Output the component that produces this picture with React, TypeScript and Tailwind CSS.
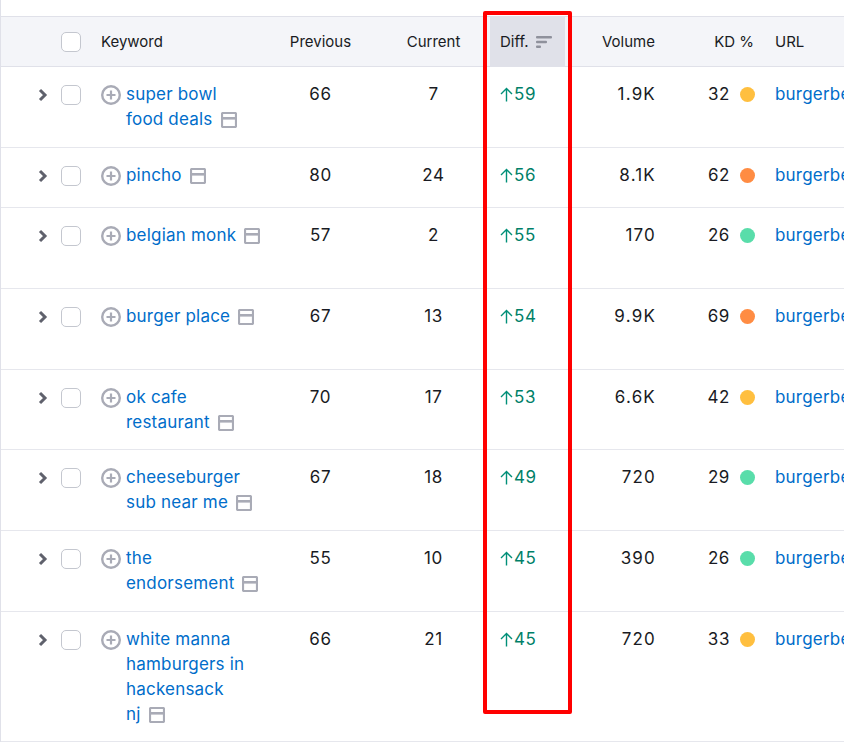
const rows = [
  { lines: ['super bowl', 'food deals'], prev: 66, cur: 7, diff: 59, vol: '1.9K', kd: 32, dot: 'bg-[#ffbf3f]', h: 'h-[81px]' },
  { lines: ['pincho'], prev: 80, cur: 24, diff: 56, vol: '8.1K', kd: 62, dot: 'bg-[#ff8c43]', h: 'h-[60px]' },
  { lines: ['belgian monk'], prev: 57, cur: 2, diff: 55, vol: '170', kd: 26, dot: 'bg-[#59ddaa]', h: 'h-[81px]' },
  { lines: ['burger place'], prev: 67, cur: 13, diff: 54, vol: '9.9K', kd: 69, dot: 'bg-[#ff8c43]', h: 'h-[81px]' },
  { lines: ['ok cafe', 'restaurant'], prev: 70, cur: 17, diff: 53, vol: '6.6K', kd: 42, dot: 'bg-[#ffbf3f]', h: 'h-[80px]' },
  { lines: ['cheeseburger', 'sub near me'], prev: 67, cur: 18, diff: 49, vol: '720', kd: 29, dot: 'bg-[#59ddaa]', h: 'h-[81px]' },
  { lines: ['the', 'endorsement'], prev: 55, cur: 10, diff: 45, vol: '390', kd: 26, dot: 'bg-[#59ddaa]', h: 'h-[81px]' },
  { lines: ['white manna', 'hamburgers in', 'hackensack', 'nj'], prev: 66, cur: 21, diff: 45, vol: '720', kd: 33, dot: 'bg-[#ffbf3f]', h: 'h-[130px]' },
];

function Checkbox() {
  return <div className="w-5 h-5 rounded-[5px] border border-[#c4c7cf] bg-white" />;
}

function SerpIcon() {
  return (
    <svg width="16" height="16" viewBox="0 0 16 16" className="inline-block ml-2 align-[-3px]">
      <rect x="1" y="1" width="14" height="14" rx="1" fill="none" stroke="#a9abb6" strokeWidth="2.2" />
      <rect x="1" y="5" width="14" height="2.6" fill="#a9abb6" />
    </svg>
  );
}

function PlusIcon() {
  return (
    <svg width="20" height="20" viewBox="0 0 20 20" className="shrink-0">
      <circle cx="10" cy="10" r="8.8" fill="none" stroke="#a9abb6" strokeWidth="2.4" />
      <path d="M10 5.5v9M5.5 10h9" stroke="#a9abb6" strokeWidth="2.2" />
    </svg>
  );
}

function Chevron() {
  return (
    <svg width="10" height="14" viewBox="0 0 10 14">
      <path d="M2 2l5 5-5 5" fill="none" stroke="#5f616c" strokeWidth="3" />
    </svg>
  );
}

function SortIcon() {
  return (
    <svg width="16" height="14" viewBox="0 0 16 14">
      <rect x="0" y="1" width="16" height="2.4" rx="1" fill="#8f919c" />
      <rect x="0" y="5.8" width="11" height="2.4" rx="1" fill="#8f919c" />
      <rect x="0" y="10.6" width="5" height="2.4" rx="1" fill="#8f919c" />
    </svg>
  );
}

function UpArrow() {
  return (
    <svg width="13" height="15" viewBox="0 0 13 15" className="shrink-0">
      <path d="M6.5 14.5V1.5M1 7l5.5-5.5L12 7" fill="none" stroke="#008f78" strokeWidth="1.4" />
    </svg>
  );
}

export default function App() {
  return (
    <div className="relative w-[844px] h-[746px] overflow-hidden bg-white text-[#191b23] font-['Inter',sans-serif]">
      <div className="pt-4 border-l border-[#e0e1e9] w-[900px]">
        {/* header */}
        <div className="flex items-center h-[51px] bg-[#f4f5f9] border-y border-[#e0e1e9] text-[15px] leading-[22px]">
          <div className="w-[80px] shrink-0 flex justify-end"><Checkbox /></div>
          <div className="w-[183px] pl-5 pt-[1px] shrink-0">Keyword</div>
          <div className="w-[113px] pt-[1px] text-center shrink-0">Previous</div>
          <div className="w-[113px] pt-[1px] text-center shrink-0">Current</div>
          <div className="w-[75px] h-full flex items-center gap-[8px] pl-[10px] pt-[1px] bg-[#e0e1e9] shrink-0">
            Diff.<SortIcon />
          </div>
          <div className="w-[90px] pt-[1px] text-right shrink-0">Volume</div>
          <div className="w-[99px] pt-[1px] text-right shrink-0">KD %</div>
          <div className="pl-[21px] pt-[1px]">URL</div>
        </div>
        {/* rows */}
        {rows.map((row, i) => (
          <div key={i} className={`flex items-start pt-[15px] border-b border-[#e6e7ed] text-[17px] leading-[25px] tracking-[0.2px] ${row.h}`}>
            <div className="w-[80px] h-[25px] shrink-0 flex items-center justify-end gap-[13px]">
              <Chevron />
              <Checkbox />
            </div>
            <div className="w-[183px] pl-5 shrink-0 flex gap-[5px]">
              <div className="h-[25px] flex items-center"><PlusIcon /></div>
              <div className="text-[#006dca] whitespace-nowrap">
                {row.lines.map((line, j) => (
                  <div key={j}>
                    {line}
                    {j === row.lines.length - 1 && <SerpIcon />}
                  </div>
                ))}
              </div>
            </div>
            <div className="w-[113px] text-center shrink-0 tracking-[0.6px]">{row.prev}</div>
            <div className="w-[113px] text-center shrink-0 tracking-[0.6px]">{row.cur}</div>
            <div className="w-[75px] pl-[10px] shrink-0 flex items-center text-[#008068] h-[25px] tracking-[0.6px]">
              <UpArrow />
              <span className="ml-[1px]">{row.diff}</span>
            </div>
            <div className="w-[91px] text-right shrink-0 tracking-[1.2px]">{row.vol}</div>
            <div className="w-[99px] shrink-0 flex items-center justify-end gap-[10px] h-[25px] tracking-[0.6px]">
              <span>{row.kd}</span>
              <span className={`w-[15px] h-[15px] rounded-full ${row.dot}`} />
            </div>
            <div className="pl-5 text-[#006dca]">burgerbeast.com</div>
          </div>
        ))}
      </div>
      {/* highlight annotation */}
      <div className="absolute left-[483px] top-[11px] w-[89px] h-[703px] border-[4px] border-[#ff0000] rounded-[2px]" />
    </div>
  );
}
